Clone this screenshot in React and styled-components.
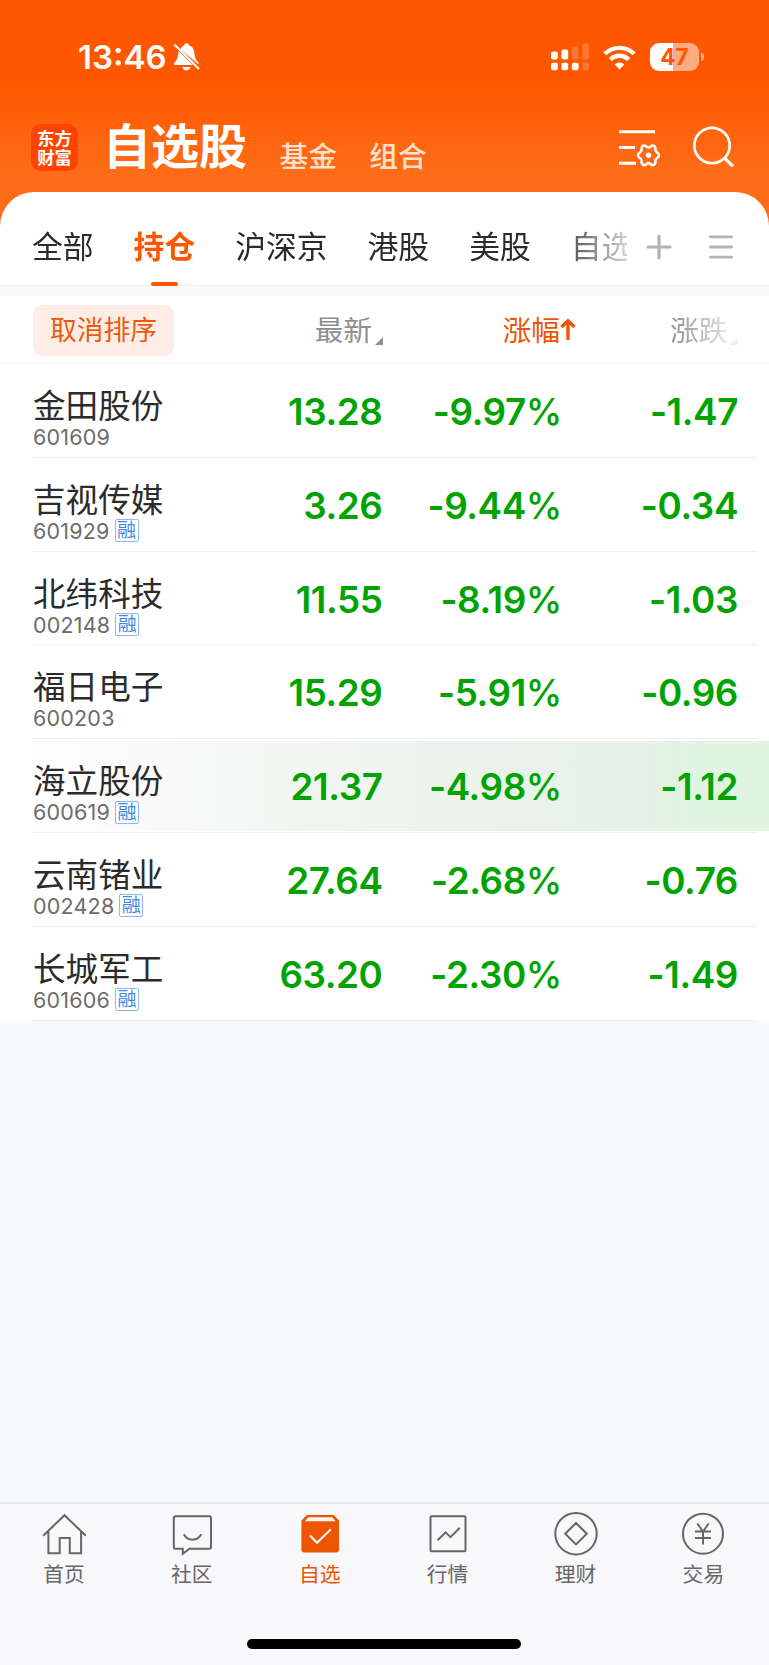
import React, { useState } from "react";
import styled, { createGlobalStyle, css } from "styled-components";

const GlobalStyle = createGlobalStyle`
  * {
    box-sizing: border-box;
  }

  body {
    margin: 0;
    background: #f7f8fa;
    font-family: Inter, "Noto Sans CJK SC", sans-serif;
  }

  button {
    margin: 0;
    padding: 0;
    border: 0;
    background: none;
    color: inherit;
    font: inherit;
  }

  svg {
    display: block;
    flex: none;
  }
`;

const Screen = styled.div`
  display: flex;
  flex-direction: column;
  width: 769px;
  height: 1665px;
  overflow: hidden;
  background: #f7f8fa;
`;

const Top = styled.div`
  background: linear-gradient(#ff5700 0, #ff5700 80px, #ff6c17 170px, #ff6c17);
`;

const StatusBar = styled.div`
  display: flex;
  align-items: center;
  justify-content: space-between;
  height: 114px;
  padding: 0 65px 0 78px;
  color: #fff;
`;

const StatusGroup = styled.div`
  display: flex;
  align-items: center;
  gap: ${({ $gap }) => $gap}px;
`;

const Clock = styled.span`
  font-size: 33px;
  font-weight: 600;
  line-height: 40px;
`;

const Battery = styled.div`
  display: flex;
  align-items: center;
  gap: 2px;

  &::after {
    content: "";
    width: 3px;
    height: 8px;
    border-radius: 0 4px 4px 0;
    background: #ffab80;
  }
`;

const BatteryBody = styled.div`
  width: 49px;
  height: 28px;
  border-radius: 9px;
  background: linear-gradient(to right, #fff 47%, #ffab80 47%);
  color: #ff5700;
  font-size: 22.5px;
  font-weight: 700;
  line-height: 28px;
  text-align: center;
`;

const Header = styled.header`
  display: flex;
  align-items: center;
  height: 78px;
  padding: 0 34px 12px 31px;
`;

const Logo = styled.div`
  width: 47px;
  height: 47px;
  margin: 0 25px 0 0;
  padding: 4px 0;
  border-radius: 10px;
  background: #ff4400;
  color: #fff;
  font-family: "Noto Sans CJK SC", sans-serif;
  font-size: 17.3px;
  font-weight: 700;
  text-align: center;
`;

const LogoLine = styled.div`
  height: 19.5px;
  line-height: 19.5px;
`;

const Title = styled.h1`
  margin: 0 32.5px 0 0;
  color: #fff;
  font-size: 48px;
  font-weight: 700;
  line-height: 60px;
`;

const HeaderLink = styled.button`
  margin: 19px 32px 0 0;
  color: #ffe0cd;
  font-size: 28.8px;
  font-weight: 500;
  line-height: 34px;
`;

const HeaderActions = styled.div`
  display: flex;
  align-items: center;
  gap: 32px;
  margin-left: auto;
`;

const TabBar = styled.nav`
  display: flex;
  align-items: center;
  height: 94px;
  padding: 0 36px 0 32px;
  border-bottom: 1px solid #ebecee;
  border-radius: 34px 34px 0 0;
  background: #fff;
`;

const TabList = styled.div`
  display: flex;
  gap: 40px;
  width: 595px;
  height: 94px;
  margin-bottom: -1px;
  overflow: hidden;
  mask-image: linear-gradient(to right, #000 520px, transparent 615px);
`;

const Tab = styled.button`
  display: flex;
  flex: none;
  flex-direction: column;
  align-items: center;
  justify-content: space-between;
  height: 94px;
  padding-top: 37px;
  color: #2b2b2b;
  font-size: 30.8px;
  line-height: 36px;

  ${({ $active }) =>
    $active &&
    css`
      color: #ff5500;
      font-weight: 700;

      &::after {
        content: "";
        width: 27px;
        height: 4px;
        border-radius: 2px;
        background: #ff5500;
      }
    `}
`;

const TabActions = styled.div`
  display: flex;
  align-items: center;
  gap: 37px;
  margin-left: auto;
  padding-top: 16px;
`;

const Board = styled.section`
  margin-top: 10px;
  background: #fff;
`;

const columns = css`
  display: grid;
  grid-template-columns: 200px 149.5px 179.5px 176px;
`;

const BoardHead = styled.div`
  ${columns}
  align-items: center;
  height: 68px;
  padding: 2px 0 0 33px;
  border-bottom: 1.5px solid #f5f5f6;
`;

const ResetButton = styled.button`
  width: 141px;
  height: 51px;
  border-radius: 9px;
  background: #feede7;
  color: #ec5a0c;
  font-size: 26.8px;
  line-height: 51px;
`;

const HeadCell = styled.div`
  display: flex;
  justify-content: flex-end;
  color: ${({ $active }) => ($active ? "#ee5500" : "#8f8f8f")};
  font-size: 28.7px;
  line-height: 37px;
  ${({ $shift }) => $shift && `margin-right: -${$shift}px;`}
  ${({ $fade }) =>
    $fade && "mask-image: linear-gradient(to right, #000 62%, rgba(0, 0, 0, 0.1));"}
`;

const Corner = styled.i`
  align-self: flex-end;
  margin: 0 0 4px 2.5px;
  border: 4px solid;
  border-color: transparent currentColor currentColor transparent;
`;

const Row = styled.div`
  height: 93.8px;
  padding-top: 2px;
  display: flex;
  flex-direction: column;

  &::after {
    content: "";
    flex: none;
    height: 1px;
    margin: 1px 11px 0 32px;
    background: #efeff0;
  }
`;

const RowBody = styled.div`
  ${columns}
  flex: none;
  height: 89.8px;
  padding-left: 33px;
  ${({ $flash }) =>
    $flash &&
    "background: linear-gradient(to right, #fff 0, #f9faf9 20%, #eef4ef 50%, #e5f1e6 82%, #e0f4e0 92%);"}
`;

const Stock = styled.div`
  padding-top: 21px;
`;

const StockName = styled.div`
  color: #2b2b2b;
  font-size: 32.6px;
  line-height: 38px;
  white-space: nowrap;
`;

const StockCode = styled.div`
  display: flex;
  align-items: center;
  gap: 5px;
  height: 24px;
  color: #6c6c6c;
  font-size: 21.5px;
  line-height: 24px;
  letter-spacing: 0.2px;
`;

const Margin = styled.span`
  width: 24px;
  height: 23px;
  border: 1.5px solid #8bb9f0;
  border-radius: 2px;
  color: #3f8ae6;
  font-size: 19px;
  line-height: 21px;
  text-align: center;
`;

const Figure = styled.div`
  padding-top: 2px;
  color: #00a300;
  font-size: 36.8px;
  font-weight: 600;
  line-height: 87.8px;
  letter-spacing: -0.4px;
  text-align: right;
`;

const Percent = styled.span`
  font-weight: 500;
`;

const BottomBar = styled.nav`
  display: grid;
  grid-template-columns: repeat(6, 127.9px);
  align-content: start;
  height: 163px;
  margin-top: auto;
  border-top: 2px solid #e8e9eb;
  background: #f8f8fb;
`;

const BottomItem = styled.button`
  display: flex;
  flex-direction: column;
  align-items: center;
  gap: 5px;
  height: 91px;
  padding-top: 8px;
  color: ${({ $active }) => ($active ? "#ee5500" : "#666")};
  font-size: 20.8px;
  line-height: 28px;
`;

const HomeIndicator = styled.div`
  grid-column: 1 / -1;
  width: 274px;
  height: 10px;
  margin: 44px auto 0;
  border-radius: 5px;
  background: #000;
`;

const BellOff = () => (
  <svg width="27" height="30" viewBox="0 0 27 30" fill="#fff">
    <path d="M5.6 9.2 19.8 23H2.2c-1.4 0-1.8-1.2-.9-2.2l1.6-1.9c1.4-1.7 2.1-5.2 2.7-9.7zM7.3 7.2c1-2 2.3-3.2 3.9-3.6C11.3 2 12.3 1.2 13.6 1.2S15.9 2 16 3.6c3.6.8 5.2 4 5.5 8.1.3 3.7 1 5.7 2.5 7.3l1.3 1.6c.5.7.6 1.3.3 1.8zM9.500 25h8c-.5 2.2-2.1 3.5-4 3.5S10 27.2 9.5 25z" />
    <path d="M1.3 2.5 26 27" fill="none" stroke="#fff" strokeWidth="2.1" />
  </svg>
);

const Signal = () => (
  <svg width="38" height="28" viewBox="0 0 38 28" fill="#fff">
    <rect x="0" y="8.5" width="6.8" height="8" rx="2" />
    <rect x="10.4" y="6.5" width="6.8" height="10" rx="2" />
    <rect x="20.8" y="3.5" width="6.6" height="13" rx="2" opacity=".2" />
    <rect x="31.2" y=".5" width="6.6" height="16" rx="2" opacity=".2" />
    <rect x="0" y="19.7" width="6.8" height="7.5" rx="2" />
    <rect x="10.4" y="19.7" width="6.8" height="7.5" rx="2" />
    <rect x="20.8" y="19.7" width="6.8" height="7.5" rx="2" />
    <rect x="31.2" y="19.7" width="6.6" height="7.5" rx="2" opacity=".2" />
  </svg>
);

const Wifi = () => (
  <svg width="33" height="25" viewBox="0 0 33 25">
    <g fill="none" stroke="#fff" strokeWidth="4.3">
      <path d="M1.8 8.8a21 21 0 0 1 29.4 0" />
      <path d="M7.3 14.5a13.2 13.2 0 0 1 18.4 0" />
    </g>
    <path d="M16.5 24.4 11.6 19.5a7 7 0 0 1 9.8 0z" fill="#fff" />
  </svg>
);

// Zębatka z sześcioma zaokrąglonymi ząbkami
const FilterIcon = () => (
  <svg width="42" height="42" viewBox="0 0 42 42" fill="none" stroke="#fff" strokeWidth="3">
    <path d="M0 5.800h36M0 21.500h16M0 37.200h17" />
    <path
      d="M23.500 20.200Q26 18.700 27.600 20.700Q29.500 22.300 31.400 20.700Q33 18.700 35.500 20.200Q37 21.500 36.400 23.800Q36.700 26 38.500 26.900Q40.200 27.800 39.900 29.300Q40.200 30.800 38.500 31.700Q36.700 32.600 36.400 34.800Q37 37.100 35.500 38.400Q33 39.900 31.400 37.900Q29.500 36.300 27.600 37.900Q26 39.900 23.500 38.400Q22 37.100 22.600 34.800Q22.300 32.600 20.500 31.700Q18.800 30.800 19.100 29.300Q18.800 27.800 20.500 26.900Q22.300 26 22.600 23.800Q22 21.500 23.500 20.200z"
      strokeWidth="2.600"
      strokeLinejoin="round"
    />
    <circle cx="29.500" cy="29.300" r="2.700" fill="#fff" stroke="none" />
  </svg>
);

const SearchIcon = () => (
  <svg width="42" height="42" viewBox="0 0 42 42" fill="none" stroke="#fff" strokeWidth="2.7">
    <circle cx="19" cy="19.5" r="17.7" />
    <path d="M31 31.5 40 40.3" strokeWidth="3.2" />
  </svg>
);

const PlusIcon = () => (
  <svg width="26" height="26" viewBox="0 0 26 26" stroke="#b3b3b3" strokeWidth="3.2" strokeLinecap="round">
    <path d="M13 2v22M2 13h22" />
  </svg>
);

const MenuIcon = () => (
  <svg width="24" height="26" viewBox="0 0 24 26" stroke="#b3b3b3" strokeWidth="2.8" strokeLinecap="round">
    <path d="M1.4 2.8h21.2M1.4 13h21.2M1.4 23.2h21.2" />
  </svg>
);

const SortArrow = () => (
  <svg width="16" height="36" viewBox="0 0 16 36" fill="none" stroke="#ee5500" strokeWidth="3.4">
    <path d="M8 28V9M1.5 15 8 8.8l6.500 6.2" />
  </svg>
);

// Rysunki ikon dolnego menu w polu 44x44
const navIcons = {
  home: <path d="M1.2 23.8 22.5 3.2l21.3 20.6M6.4 19v22.3h11.3V26h10.1v15.3h11.3V19" />,
  community: (
    <>
      <path d="M5.3 4.2h34.2a1.500 1.500 0 0 1 1.500 1.500v29.6a1.500 1.500 0 0 1-1.500 1.500h-20l-6.700 5v-5H5.3a1.500 1.500 0 0 1-1.500-1.500V5.7a1.500 1.500 0 0 1 1.500-1.500z" />
      <path d="M13.8 22.3c3.8 7.2 13.7 7.2 17.4 0" />
    </>
  ),
  watchlist: (
    <>
      <path
        d="M9 3h26.6L41 8.6V37.5a3 3 0 0 1-3 3H6.4a3 3 0 0 1-3-3V8.6z"
        fill="currentColor"
        stroke="none"
      />
      <path d="M10.3 5.2h24l3.4 4H6.9z" fill="#f8f8fb" stroke="none" />
      <path d="M12 23.5l7 7.3 13.8-13.6" stroke="#f8f8fb" />
    </>
  ),
  market: (
    <>
      <rect x="4.5" y="4.3" width="35" height="35" rx="1" />
      <path d="M11.5 28.2 19.7 20.3l4.8 4.8 9.3-9.3" />
    </>
  ),
  finance: (
    <>
      <circle cx="22" cy="21.7" r="20.7" />
      <path d="M22 11l10.8 10.7L22 32.4 11.2 21.7z" />
    </>
  ),
  trade: (
    <>
      <circle cx="22" cy="21.7" r="20" />
      <path d="M16.3 11.5 22 19.5l5.700-8M14 19.5h16M14 26h16M22 19.5v13" />
    </>
  ),
};

const tabs = ["全部", "持仓", "沪深京", "港股", "美股", "自选"];

const stocks = [
  { name: "金田股份", code: "601609", price: "13.28", percent: "-9.97", change: "-1.47" },
  { name: "吉视传媒", code: "601929", margin: true, price: "3.26", percent: "-9.44", change: "-0.34" },
  { name: "北纬科技", code: "002148", margin: true, price: "11.55", percent: "-8.19", change: "-1.03" },
  { name: "福日电子", code: "600203", price: "15.29", percent: "-5.91", change: "-0.96" },
  { name: "海立股份", code: "600619", margin: true, price: "21.37", percent: "-4.98", change: "-1.12", flash: true },
  { name: "云南锗业", code: "002428", margin: true, price: "27.64", percent: "-2.68", change: "-0.76" },
  { name: "长城军工", code: "601606", margin: true, price: "63.20", percent: "-2.30", change: "-1.49" },
];

const navItems = [
  { icon: "home", label: "首页" },
  { icon: "community", label: "社区" },
  { icon: "watchlist", label: "自选" },
  { icon: "market", label: "行情" },
  { icon: "finance", label: "理财" },
  { icon: "trade", label: "交易" },
];

const App = () => {
  const [activeTab, setActiveTab] = useState("持仓");
  const [activeNav, setActiveNav] = useState("watchlist");

  return (
    <Screen>
      <GlobalStyle />
      <Top>
        <StatusBar>
          <StatusGroup $gap={6.5}>
            <Clock>13:46</Clock>
            <BellOff />
          </StatusGroup>
          <StatusGroup $gap={14}>
            <Signal />
            <Wifi />
            <Battery>
              <BatteryBody>47</BatteryBody>
            </Battery>
          </StatusGroup>
        </StatusBar>

        <Header>
          <Logo>
            <LogoLine>东方</LogoLine>
            <LogoLine>财富</LogoLine>
          </Logo>
          <Title>自选股</Title>
          <HeaderLink>基金</HeaderLink>
          <HeaderLink>组合</HeaderLink>
          <HeaderActions>
            <FilterIcon />
            <SearchIcon />
          </HeaderActions>
        </Header>

        <TabBar>
          <TabList>
            {tabs.map((tab) => (
              <Tab key={tab} $active={tab === activeTab} onClick={() => setActiveTab(tab)}>
                {tab}
              </Tab>
            ))}
          </TabList>
          <TabActions>
            <PlusIcon />
            <MenuIcon />
          </TabActions>
        </TabBar>
      </Top>

      <Board>
        <BoardHead>
          <ResetButton>取消排序</ResetButton>
          <HeadCell>
            最新
            <Corner />
          </HeadCell>
          <HeadCell $active $shift={14}>
            涨幅
            <SortArrow />
          </HeadCell>
          <HeadCell $fade>
            涨跌
            <Corner />
          </HeadCell>
        </BoardHead>

        {stocks.map((stock) => (
          <Row key={stock.code}>
            <RowBody $flash={stock.flash}>
              <Stock>
                <StockName>{stock.name}</StockName>
                <StockCode>
                  {stock.code}
                  {stock.margin && <Margin>融</Margin>}
                </StockCode>
              </Stock>
              <Figure>{stock.price}</Figure>
              <Figure>
                {stock.percent}
                <Percent>%</Percent>
              </Figure>
              <Figure>{stock.change}</Figure>
            </RowBody>
          </Row>
        ))}
      </Board>

      <BottomBar>
        {navItems.map(({ icon, label }) => (
          <BottomItem key={icon} $active={icon === activeNav} onClick={() => setActiveNav(icon)}>
            <svg width="44" height="44" viewBox="0 0 44 44" fill="none" stroke="currentColor" strokeWidth="2">
              {navIcons[icon]}
            </svg>
            {label}
          </BottomItem>
        ))}
        <HomeIndicator />
      </BottomBar>
    </Screen>
  );
};

export default App;
